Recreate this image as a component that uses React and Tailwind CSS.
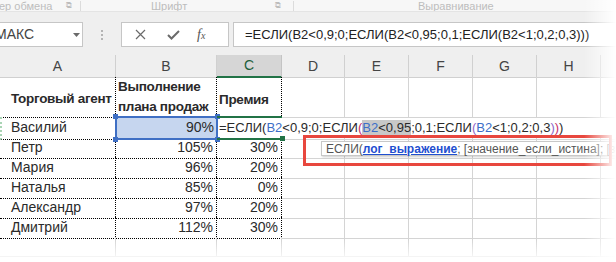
import React from "react";

const data = [
  ["Петр", "105%", "30%"],
  ["Мария", "96%", "20%"],
  ["Наталья", "85%", "0%"],
  ["Александр", "97%", "20%"],
  ["Дмитрий", "112%", "30%"],
];

const gridCols = "grid grid-cols-[116px_101px_65px_63px_64px_64px_64px_64px_15px]";

function GrayCells({ n }) {
  return (
    <>
      {Array.from({ length: n }).map((_, i) => (
        <div key={i} className="border-r border-b border-[#d4d4d4]" />
      ))}
    </>
  );
}

function Formula() {
  return (
    <span className="whitespace-nowrap text-[13px]">
      =ЕСЛИ(<span className="text-[#3c6ec8]">B2</span>&lt;0,9;0;ЕСЛИ
      <span className="text-[#c8306a]">(</span>
      <span className="bg-[#c8c8c8]">
        <span className="text-[#3c6ec8]">B2</span>&lt;0,95
      </span>
      ;0,1;ЕСЛИ<span className="text-[#9064c8]">(</span>
      <span className="text-[#3c6ec8]">B2</span>&lt;1;0,2;0,3
      <span className="text-[#9064c8]">)</span>
      <span className="text-[#c8306a]">)</span>)
    </span>
  );
}

export default function App() {
  return (
    <div className="relative w-[616px] h-[262px] overflow-hidden bg-white font-['Liberation_Sans',sans-serif] text-[#2a2a2a]">
      {/* ribbon group labels */}
      <div className="h-[12px] bg-[#f7f7f7] border-b border-[#e4e4e4] flex items-center text-[11px] leading-[12px] text-[#bdbdbd] overflow-hidden">
        <span className="ml-[-1px] w-[67px]">ер обмена</span>
        <span className="w-[14px] text-[8px]">⧉</span>
        <span className="w-px h-[10px] bg-[#dcdcdc]" />
        <span className="ml-[70px] w-[124px]">Шрифт</span>
        <span className="w-[18px] text-[8px]">⧉</span>
        <span className="w-px h-[10px] bg-[#dcdcdc]" />
        <span className="ml-[124px]">Выравнивание</span>
      </div>

      {/* formula bar */}
      <div className="h-[43px] bg-[#efefef] flex items-start pt-[10px]">
        <div className="ml-[-2px] w-[85px] h-[25px] bg-white border border-[#c6c6c6] flex items-center overflow-hidden">
          <span className="ml-[-4px] text-[14px] text-[#444]">МАКС</span>
          <svg className="ml-auto mr-[2px]" width="7" height="4" viewBox="0 0 7 4">
            <path d="M0 0 L7 0 L3.5 4 Z" fill="#6a6a6a" />
          </svg>
        </div>
        <div className="w-[38px] h-[25px] flex flex-col items-center justify-center gap-[2px]">
          <span className="w-[2px] h-[2px] bg-[#b4b4b4]" />
          <span className="w-[2px] h-[2px] bg-[#b4b4b4]" />
          <span className="w-[2px] h-[2px] bg-[#b4b4b4]" />
        </div>
        <div className="w-[108px] h-[25px] bg-white border border-[#c6c6c6] flex items-center">
          <svg className="ml-[13px]" width="11" height="11" viewBox="0 0 11 11">
            <path d="M1 1 L10 10 M10 1 L1 10" stroke="#6a6a6a" strokeWidth="1.2" />
          </svg>
          <svg className="ml-[21px]" width="13" height="10" viewBox="0 0 13 10">
            <path d="M1 5 L4.5 8.5 L12 1" stroke="#6a6a6a" strokeWidth="2" fill="none" />
          </svg>
          <span className="ml-[17px] font-['Liberation_Serif',serif] italic text-[14px] text-[#555] leading-none">
            f<span className="text-[10px]">x</span>
          </span>
        </div>
        <div className="ml-[4px] flex-1 h-[25px] bg-white border border-[#c6c6c6] border-r-0 flex items-center pl-[11px] text-[13px] text-[#222] whitespace-nowrap">
          =ЕСЛИ(B2&lt;0,9;0;ЕСЛИ(B2&lt;0,95;0,1;ЕСЛИ(B2&lt;1;0,2;0,3)))
        </div>
      </div>

      {/* column headers */}
      <div className={`${gridCols} h-[22px] bg-[#efefef] text-[14px] text-[#444]`}>
        {["A", "B"].map((c) => (
          <div key={c} className="border-r border-b border-[#d0d0d0] flex items-center justify-center">
            {c}
          </div>
        ))}
        <div className="bg-[#d6d6d6] border-r border-[#c4c4c4] border-b-2 border-b-[#217346] text-[#1d5e3a] flex items-center justify-center">
          C
        </div>
        {["D", "E", "F", "G", "H", ""].map((c, i) => (
          <div key={i} className="border-r border-b border-[#d0d0d0] flex items-center justify-center">
            {c}
          </div>
        ))}
      </div>

      {/* row 1 */}
      <div className={`${gridCols} h-[40px] text-[13.5px] font-bold`}>
        <div className="border-r border-b border-dotted border-black flex items-end pb-[8px] pl-[11px] tracking-[-0.3px]">
          Торговый агент
        </div>
        <div className="border-r border-b border-dotted border-black pl-[2px] leading-[20px] tracking-[-0.3px]">
          <div>Выполнение</div>
          <div>плана продаж</div>
        </div>
        <div className="border-r border-dotted border-black flex items-end pb-[8px] pl-[2px] tracking-[-0.3px]">
          Премия
        </div>
        <GrayCells n={6} />
      </div>

      {/* row 2 */}
      <div className={`${gridCols} h-[20px] text-[14px]`}>
        <div className="border-r border-b border-dotted border-black border-l-2 border-l-[#a9d4b4] flex items-center pl-[9px]">
          Василий
        </div>
        <div className="relative bg-[#c6d6ef] border-b border-dotted border-black flex items-center justify-end pr-[3px]">
          90%
          <div className="absolute -left-[1px] -top-[1px] -right-[1px] -bottom-[1px] border-2 border-[#3f6fc4]" />
          <div className="absolute -left-[3px] -top-[3px] w-[5px] h-[5px] bg-[#3f6fc4]" />
          <div className="absolute -right-[3px] -top-[3px] w-[5px] h-[5px] bg-[#3f6fc4]" />
          <div className="absolute -left-[3px] -bottom-[3px] w-[5px] h-[5px] bg-[#3f6fc4]" />
          <div className="absolute -right-[3px] -bottom-[3px] w-[5px] h-[5px] bg-[#3f6fc4]" />
        </div>
        <div className="relative z-10 border-t-2 border-t-[#217346] border-b-2 border-b-[#217346] -mt-[1px] flex items-center pl-[2px] overflow-visible">
          <Formula />
          <div className="absolute -right-[3px] -bottom-[3px] w-[5px] h-[5px] bg-[#217346]" />
        </div>
        {Array.from({ length: 6 }).map((_, i) => (
          <div key={i} className="border-b border-[#d4d4d4]" />
        ))}
      </div>

      {/* data rows */}
      {data.map(([n, p, b]) => (
        <div key={n} className={`${gridCols} h-[20px] text-[14px]`}>
          <div className="border-r border-b border-dotted border-black flex items-center pl-[11px]">{n}</div>
          <div className="border-r border-b border-dotted border-black flex items-center justify-end pr-[3px]">{p}</div>
          <div className="border-r border-b border-dotted border-black flex items-center justify-end pr-[3px]">{b}</div>
          <GrayCells n={6} />
        </div>
      ))}

      {/* empty row */}
      <div className={`${gridCols} h-[20px]`}>
        <GrayCells n={9} />
      </div>

      {/* tooltip */}
      <div className="absolute left-[321px] top-[141px] w-[310px] h-[15px] bg-white border border-[#c8c8c8] shadow-[1px_1px_2px_rgba(0,0,0,0.2)] flex items-center pl-[4px] text-[12px] text-[#555] whitespace-nowrap">
        ЕСЛИ(
        <span className="font-bold text-[#1f4fd0] underline">лог_выражение</span>
        ; [значение_если_истина]; [значение_если_ложь])
      </div>

      {/* red highlight */}
      <div className="absolute left-[303px] top-[135px] w-[309px] h-[31px] border-[3px] border-[#e8473e]" />

      {/* edge fades */}
      <div className="pointer-events-none absolute right-0 top-0 w-[32px] h-full bg-linear-to-r from-white/0 to-white" />
      <div className="pointer-events-none absolute left-0 bottom-0 w-full h-[22px] bg-linear-to-b from-white/0 to-white" />
    </div>
  );
}
